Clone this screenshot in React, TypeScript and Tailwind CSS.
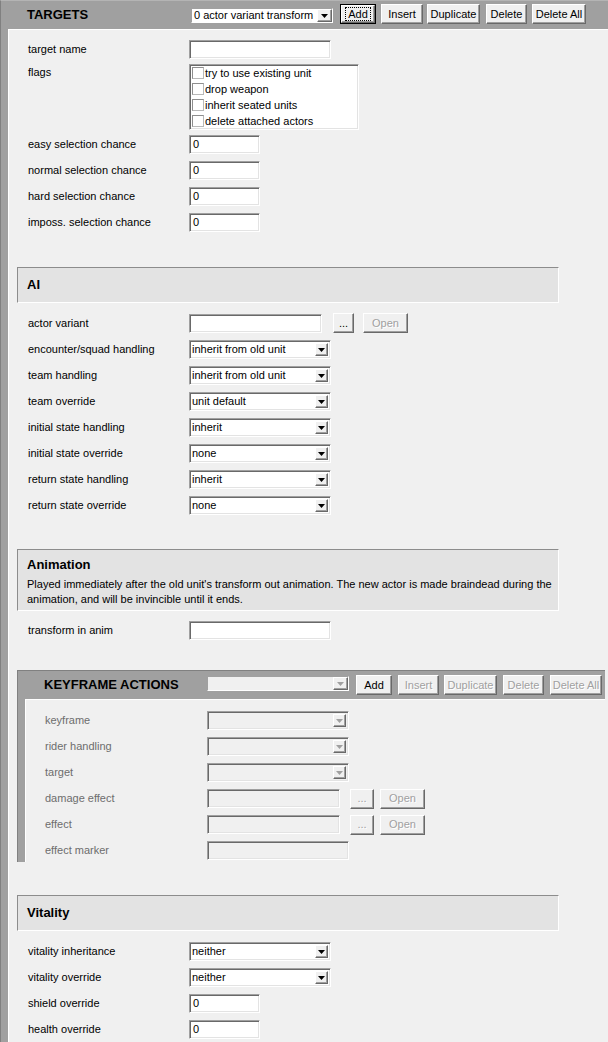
import React from "react";

// classic win32 bevels
const raised =
  "bg-[#f0f0f0] border border-t-white border-l-white border-r-[#696969] border-b-[#696969] shadow-[inset_-1px_-1px_0_#a0a0a0]";
const sunken =
  "border border-t-[#a0a0a0] border-l-[#a0a0a0] border-r-white border-b-white shadow-[inset_1px_1px_0_#696969,inset_-1px_-1px_0_#e3e3e3]";
const grayText = "text-[#a0a0a0] [text-shadow:1px_1px_0_#fff]";

function Arrow({ disabled }: { disabled?: boolean }) {
  return (
    <svg width="7" height="4" viewBox="0 0 7 4">
      <polygon points="0,0 7,0 3.5,4" fill={disabled ? "#a0a0a0" : "#000"} />
    </svg>
  );
}

type BtnProps = {
  label: string;
  className: string;
  disabled?: boolean;
  focus?: boolean;
};

function Btn({ label, className, disabled, focus }: BtnProps) {
  if (focus) {
    return (
      <div className={`h-[20px] shrink-0 border border-black ${className}`}>
        <div className={`flex h-full w-full items-center justify-center ${raised}`}>
          <span className="border border-dotted border-black px-[2px] leading-[12px]">
            {label}
          </span>
        </div>
      </div>
    );
  }
  return (
    <div
      className={`flex h-[20px] shrink-0 items-center justify-center ${raised} ${className} ${
        disabled ? grayText : ""
      }`}
    >
      {label}
    </div>
  );
}

function Combo({ value, disabled }: { value?: string; disabled?: boolean }) {
  return (
    <div
      className={`flex h-[15px] w-[142px] shrink-0 items-stretch border border-t-[#a0a0a0] border-l-[#a0a0a0] border-r-white border-b-white ${
        disabled ? "bg-[#f0f0f0]" : "bg-white"
      }`}
    >
      <div className="flex-1 overflow-hidden whitespace-nowrap pl-[2px] leading-[12px]">
        {value}
      </div>
      <div className={`flex w-[15px] items-center justify-center ${raised}`}>
        <Arrow disabled={disabled} />
      </div>
    </div>
  );
}

function Select({ value, disabled }: { value?: string; disabled?: boolean }) {
  return (
    <div
      className={`flex h-[19px] w-[142px] shrink-0 items-stretch p-[2px] ${sunken} ${
        disabled ? "bg-[#f0f0f0]" : "bg-white"
      }`}
    >
      <div className="flex-1 whitespace-nowrap leading-[13px]">{value}</div>
      <div className={`flex w-[13px] items-center justify-center ${raised}`}>
        <Arrow disabled={disabled} />
      </div>
    </div>
  );
}

function Input({ value, className, disabled }: { value?: string; className: string; disabled?: boolean }) {
  return (
    <div
      className={`h-[19px] shrink-0 pl-[3px] leading-[17px] ${sunken} ${className} ${
        disabled ? "bg-[#f0f0f0]" : "bg-white"
      }`}
    >
      {value}
    </div>
  );
}

function Row({
  label,
  children,
  className,
  labelClass = "w-[161px]",
}: {
  label: string;
  children: React.ReactNode;
  className: string;
  labelClass?: string;
}) {
  return (
    <div className={`flex items-center ${className}`}>
      <div className={`shrink-0 whitespace-nowrap ${labelClass}`}>{label}</div>
      {children}
    </div>
  );
}

function SectionHead({ title, className }: { title: string; className: string }) {
  return (
    <div
      className={`ml-[8px] flex w-[542px] items-center border border-t-[#8c8c8c] border-l-[#8c8c8c] border-r-white border-b-white bg-[#e3e3e3] pl-[9px] text-[13px] font-bold ${className}`}
    >
      {title}
    </div>
  );
}

const flags = [
  "try to use existing unit",
  "drop weapon",
  "inherit seated units",
  "delete attached actors",
];

const aiSelects = [
  { label: "encounter/squad handling", value: "inherit from old unit" },
  { label: "team handling", value: "inherit from old unit" },
  { label: "team override", value: "unit default" },
  { label: "initial state handling", value: "inherit" },
  { label: "initial state override", value: "none" },
  { label: "return state handling", value: "inherit" },
  { label: "return state override", value: "none" },
];

const chances = [
  { label: "easy selection chance", mt: "mt-[5px]" },
  { label: "normal selection chance", mt: "mt-[7px]" },
  { label: "hard selection chance", mt: "mt-[7px]" },
  { label: "imposs. selection chance", mt: "mt-[7px]" },
];

export default function App() {
  return (
    <div className="h-[1042px] w-[608px] overflow-hidden border-l border-t border-l-[#808080] border-t-[#b4b4b4] bg-[#a0a0a0] font-['Liberation_Sans',Arial,sans-serif] text-[11px] text-black">
      {/* TARGETS header */}
      <div className="flex h-[28px] items-start">
        <div className="flex h-full w-[190px] shrink-0 items-center pl-[26px] text-[13px] font-bold">
          TARGETS
        </div>
        <div className="mt-[7px]">
          <Combo value="0  actor  variant  transform" />
        </div>
        <Btn label="Add" focus className="ml-[7px] mt-[3px] w-[36px]" />
        <Btn label="Insert" className="ml-[5px] mt-[3px] w-[42px]" />
        <Btn label="Duplicate" className="ml-[4px] mt-[3px] w-[53px]" />
        <Btn label="Delete" className="ml-[6px] mt-[3px] w-[41px]" />
        <Btn label="Delete All" className="ml-[5px] mt-[3px] w-[54px]" />
      </div>

      <div className="ml-[7px] flex h-full flex-col border-l border-t border-white bg-[#f0f0f0]">
        <div className="pl-[19px]">
          <Row label="target name" className="mt-[10px]">
            <Input className="w-[142px]" />
          </Row>
          <div className="mt-[5px] flex items-start">
            <div className="w-[161px] shrink-0 pt-[2px] leading-[13px]">flags</div>
            <div className={`h-[66px] w-[170px] bg-white pl-[2px] ${sunken}`}>
              {flags.map((f) => (
                <div key={f} className="flex h-[16px] items-center">
                  <span className="h-[12px] w-[12px] border border-[#8e8e8e] border-r-[#b9b9b9] border-b-[#b9b9b9] bg-white" />
                  <span className="ml-[1px]">{f}</span>
                </div>
              ))}
            </div>
          </div>
          {chances.map((c) => (
            <Row key={c.label} label={c.label} className={c.mt}>
              <Input value="0" className="w-[71px]" />
            </Row>
          ))}
        </div>

        <SectionHead title="AI" className="mt-[35px] h-[36px]" />
        <div className="pl-[19px]">
          <Row label="actor variant" className="mt-[10px]">
            <Input className="w-[133px]" />
            <Btn label="..." className="ml-[11px] w-[21px]" />
            <Btn label="Open" disabled className="ml-[9px] w-[45px]" />
          </Row>
          {aiSelects.map((s) => (
            <Row key={s.label} label={s.label} className="mt-[7px]">
              <Select value={s.value} />
            </Row>
          ))}
        </div>

        <div className="ml-[8px] mt-[34px] h-[62px] w-[542px] border border-t-[#8c8c8c] border-l-[#8c8c8c] border-r-white border-b-white bg-[#e3e3e3] pl-[9px] pt-[7px]">
          <div className="text-[13px] font-bold leading-[15px]">Animation</div>
          <div className="mt-[5px] leading-[15px]">
            <div className="whitespace-nowrap">
              Played immediately after the old unit's transform out animation. The new actor is made braindead during the
            </div>
            <div className="whitespace-nowrap">animation, and will be invincible until it ends.</div>
          </div>
        </div>
        <div className="pl-[19px]">
          <Row label="transform in anim" className="mt-[10px]">
            <Input className="w-[142px]" />
          </Row>
        </div>

        {/* KEYFRAME ACTIONS block */}
        <div className="ml-[8px] mt-[30px] flex h-[192px] w-[588px] flex-col border-l border-t border-[#808080] bg-[#a0a0a0]">
          <div className="flex h-[28px] shrink-0 items-start">
            <div className="flex h-full w-[189px] shrink-0 items-center pl-[26px] text-[13px] font-bold">
              KEYFRAME ACTIONS
            </div>
            <div className="mt-[5px]">
              <Combo disabled />
            </div>
            <Btn label="Add" className="ml-[7px] mt-[4px] w-[36px]" />
            <Btn label="Insert" disabled className="ml-[6px] mt-[4px] w-[41px]" />
            <Btn label="Duplicate" disabled className="ml-[5px] mt-[4px] w-[53px]" />
            <Btn label="Delete" disabled className="ml-[6px] mt-[4px] w-[41px]" />
            <Btn label="Delete All" disabled className="ml-[6px] mt-[4px] w-[52px]" />
          </div>
          <div className="ml-[7px] flex-1 border-l border-t border-white bg-[#f0f0f0] pl-[19px] text-[#6d6d6d]">
            <Row label="keyframe" labelClass="w-[162px]" className="mt-[11px] h-[19px]">
              <Select disabled />
            </Row>
            <Row label="rider handling" labelClass="w-[162px]" className="mt-[7px] h-[19px]">
              <Select disabled />
            </Row>
            <Row label="target" labelClass="w-[162px]" className="mt-[7px] h-[19px]">
              <Select disabled />
            </Row>
            <Row label="damage effect" labelClass="w-[162px]" className="mt-[7px] h-[19px]">
              <Input disabled className="w-[133px]" />
              <Btn label="..." disabled className="ml-[10px] w-[24px]" />
              <Btn label="Open" disabled className="ml-[6px] w-[45px]" />
            </Row>
            <Row label="effect" labelClass="w-[162px]" className="mt-[7px] h-[19px]">
              <Input disabled className="w-[133px]" />
              <Btn label="..." disabled className="ml-[10px] w-[24px]" />
              <Btn label="Open" disabled className="ml-[6px] w-[45px]" />
            </Row>
            <Row label="effect marker" labelClass="w-[162px]" className="mt-[7px] h-[19px]">
              <Input disabled className="w-[142px]" />
            </Row>
          </div>
        </div>

        <SectionHead title="Vitality" className="mt-[33px] h-[36px]" />
        <div className="pl-[19px]">
          <Row label="vitality inheritance" className="mt-[11px]">
            <Select value="neither" />
          </Row>
          <Row label="vitality override" className="mt-[7px]">
            <Select value="neither" />
          </Row>
          <Row label="shield override" className="mt-[7px]">
            <Input value="0" className="w-[71px]" />
          </Row>
          <Row label="health override" className="mt-[7px]">
            <Input value="0" className="w-[71px]" />
          </Row>
        </div>
      </div>
    </div>
  );
}
